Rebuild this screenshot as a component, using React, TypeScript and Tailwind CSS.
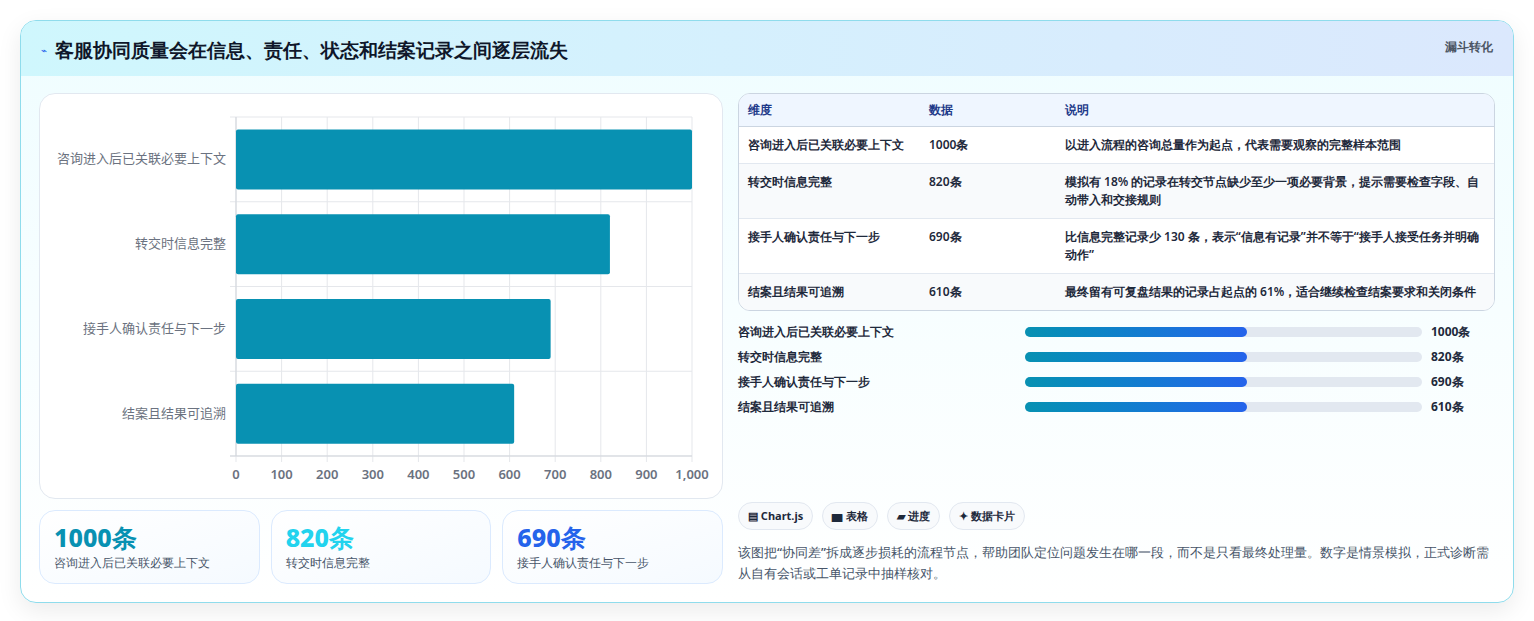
const rows = [
  { label: "咨询进入后已关联必要上下文", value: 1000, desc: "以进入流程的咨询总量作为起点，代表需要观察的完整样本范围" },
  { label: "转交时信息完整", value: 820, desc: "模拟有 18% 的记录在转交节点缺少至少一项必要背景，提示需要检查字段、自动带入和交接规则" },
  { label: "接手人确认责任与下一步", value: 690, desc: "比信息完整记录少 130 条，表示“信息有记录”并不等于“接手人接受任务并明确动作”" },
  { label: "结案且结果可追溯", value: 610, desc: "最终留有可复盘结果的记录占起点的 61%，适合继续检查结案要求和关闭条件" },
];

function BarChart() {
  const x0 = 196;
  const x1 = 652;
  const y0 = 23;
  const y1 = 362;
  const rowH = (y1 - y0) / 4;
  const sx = (v: number) => x0 + ((x1 - x0) * v) / 1000;
  const ticks = [0, 100, 200, 300, 400, 500, 600, 700, 800, 900, 1000];
  return (
    <svg width="684" height="404" className="block">
      {ticks.map((t) => (
        <line key={t} x1={sx(t)} x2={sx(t)} y1={y0} y2={y1 + 6} stroke="#e5e7eb" />
      ))}
      {[0, 1, 2, 3, 4].map((i) => (
        <line key={i} x1={x0 - 6} x2={x1} y1={y0 + i * rowH} y2={y0 + i * rowH} stroke="#e5e7eb" />
      ))}
      <line x1={x0} x2={x0} y1={y0} y2={y1} stroke="#d1d5db" />
      <line x1={x0 - 6} x2={x1} y1={y1} y2={y1} stroke="#d1d5db" />
      {rows.map((r, i) => {
        const cy = y0 + i * rowH + rowH / 2;
        return (
          <g key={r.label}>
            <rect x={x0} y={cy - 30} width={sx(r.value) - x0} height={60} rx={2} fill="#0891b2" />
            <text x={x0 - 10} y={cy + 4} textAnchor="end" fontSize="13" fill="#6b7280" fontFamily="'Noto Sans CJK SC', sans-serif">
              {r.label}
            </text>
          </g>
        );
      })}
      {ticks.map((t) => (
        <text key={t} x={sx(t)} y={385} textAnchor="middle" fontSize="13" fontWeight="600" fill="#6b7280" fontFamily="'Noto Sans', sans-serif">
          {t === 1000 ? "1,000" : t}
        </text>
      ))}
    </svg>
  );
}

const kpis = [
  { value: "1000条", label: "咨询进入后已关联必要上下文", color: "text-[#0891b2]" },
  { value: "820条", label: "转交时信息完整", color: "text-[#22d3ee]" },
  { value: "690条", label: "接手人确认责任与下一步", color: "text-[#2563eb]" },
];

const chips = ["▤ Chart.js", "▆ 表格", "▰ 进度", "✦ 数据卡片"];

export default function App() {
  return (
    <div className="min-h-screen bg-white px-5 pt-5 pb-5 font-['Noto_Sans','Noto_Sans_CJK_SC',sans-serif]">
      <div className="overflow-hidden rounded-2xl border border-[#8fdcec] bg-gradient-to-b from-[#effdff] to-white shadow-[0_8px_24px_rgba(0,0,0,0.08)]">
        <div className="flex h-[55px] items-start justify-between bg-gradient-to-r from-[#cff7fd] to-[#dbe8fd] px-5 pt-[15px]">
          <div className="flex items-center gap-2">
            <span className="text-[10px] text-[#2563eb]">⌁</span>
            <h1 className="text-[19px] font-bold text-[#0f172a]">客服协同质量会在信息、责任、状态和结案记录之间逐层流失</h1>
          </div>
          <span className="pt-[2px] text-[12px] font-bold text-[#4b5563]">漏斗转化</span>
        </div>
        <div className="flex gap-[15px] px-[18px] pt-[17px] pb-[18px]">
          <div className="flex w-[684px] flex-col gap-[11px]">
            <div className="rounded-2xl border border-[#e2e8f0] bg-white">
              <BarChart />
            </div>
            <div className="grid grid-cols-3 gap-[11px]">
              {kpis.map((k) => (
                <div key={k.value} className="h-[74px] rounded-2xl border border-[#dbeafe] bg-gradient-to-br from-white to-[#f5faff] px-[14px] pt-[9px]">
                  <div className={`text-[25px] font-extrabold leading-[34px] ${k.color}`}>{k.value}</div>
                  <div className="text-[12px] font-medium text-[#475569]">{k.label}</div>
                </div>
              ))}
            </div>
          </div>
          <div className="flex flex-1 flex-col">
            <div className="overflow-hidden rounded-xl border border-[#cbd5e1] bg-white text-[12px] font-semibold text-[#1e293b]">
              <div className="flex h-[33px] items-center border-b border-[#cbd5e1] bg-[#eff6ff] px-[9px] text-[#1e3a8a]">
                <div className="w-[181px]">维度</div>
                <div className="w-[136px]">数据</div>
                <div className="flex-1">说明</div>
              </div>
              {rows.map((r, i) => (
                <div key={r.label} className={`flex px-[9px] py-[9px] leading-[18px] ${i < 3 ? "border-b border-[#e2e8f0]" : ""} ${i % 2 === 1 ? "bg-[#f8fafc]" : "bg-white"}`}>
                  <div className="w-[181px]">{r.label}</div>
                  <div className="w-[136px]">{r.value}条</div>
                  <div className="flex-1">{r.desc}</div>
                </div>
              ))}
            </div>
            <div className="mt-[12px] flex flex-col gap-[7px] text-[12px] font-semibold text-[#1e293b]">
              {rows.map((r) => (
                <div key={r.label} className="flex h-[18px] items-center">
                  <div className="w-[287px]">{r.label}</div>
                  <div className="h-[10px] w-[397px] rounded-full bg-[#e2e8f0]">
                    <div className="h-full w-[56%] rounded-full bg-gradient-to-r from-[#0891b2] to-[#2563eb]" />
                  </div>
                  <div className="ml-[9px] font-bold">{r.value}条</div>
                </div>
              ))}
            </div>
            <div className="mt-auto flex gap-[9px]">
              {chips.map((c) => (
                <span key={c} className="rounded-full border border-[#e2e8f0] bg-[#f8fafc] px-[9px] py-[5px] text-[11px] font-bold text-[#1e293b]">
                  {c}
                </span>
              ))}
            </div>
            <p className="mt-[12px] text-[13px] font-medium leading-[21px] text-[#475569]">
              该图把“协同差”拆成逐步损耗的流程节点，帮助团队定位问题发生在哪一段，而不是只看最终处理量。数字是情景模拟，正式诊断需从自有会话或工单记录中抽样核对。
            </p>
          </div>
        </div>
      </div>
    </div>
  );
}
